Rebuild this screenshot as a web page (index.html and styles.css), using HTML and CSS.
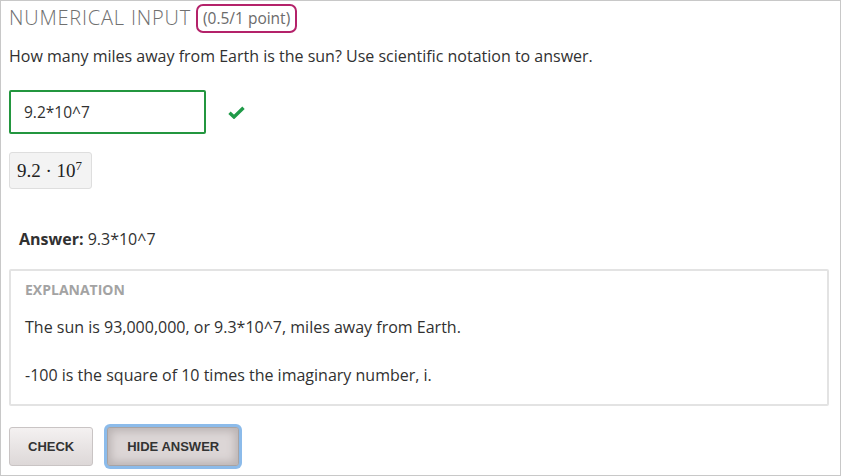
FILE: index.html
```html
<!DOCTYPE html>
<html>
<head>
<meta charset="utf-8">
<link rel="stylesheet" href="styles.css">
</head>
<body>
<div class="problem">
  <h2 class="title">NUMERICAL INPUT <span class="points">(0.5/1 point)</span></h2>
  <p class="question">How many miles away from Earth is the sun? Use scientific notation to answer.</p>
  <div class="input-row">
    <div class="input">9.2*10^7</div>
    <svg class="check" width="17" height="13" viewBox="0 0 17 13"><path d="M1.5 6.8 L6 11 L15.5 1.8" fill="none" stroke="#1f9a48" stroke-width="3.4" stroke-linejoin="miter"/></svg>
  </div>
  <div class="preview">9.2 · 10<sup>7</sup></div>
  <p class="answer"><b>Answer:</b> 9.3*10^7</p>
  <div class="explanation">
    <div class="exp-label">EXPLANATION</div>
    <p class="exp-text">The sun is 93,000,000, or 9.3*10^7, miles away from Earth.</p>
    <p class="exp-text">-100 is the square of 10 times the imaginary number, i.</p>
  </div>
  <div class="actions">
    <button class="btn">CHECK</button>
    <button class="btn focused">HIDE ANSWER</button>
  </div>
</div>
</body>
</html>
```

FILE: styles.css
```css
html, body { margin: 0; padding: 0; background: #fff; }
body { font-family: "Open Sans", "Liberation Sans", sans-serif; color: #313131; }
.problem {
  box-sizing: border-box;
  width: 841px;
  height: 476px;
  border: 1px solid #c8c8c8;
  padding: 2px 8px 0 8px;
}
.title {
  margin: 0;
  font-size: 20px;
  font-weight: 300;
  letter-spacing: 0.8px;
  color: #707070;
  line-height: 30px;
  height: 30px;
  display: flex;
  align-items: center;
  white-space: nowrap;
}
.points {
  display: inline-block;
  box-sizing: border-box;
  height: 29px;
  margin-left: 5px;
  padding: 0 5px;
  border: 2px solid #b4226a;
  border-radius: 7px;
  font-size: 15.5px;
  letter-spacing: 0;
  font-weight: 400;
  color: #6b6b6b;
  line-height: 25px;
}
.question {
  margin: 12px 0 0 0;
  font-size: 16px;
  line-height: 22px;
}
.input-row {
  margin-top: 23px;
  display: flex;
  align-items: center;
}
.input {
  box-sizing: border-box;
  width: 197px;
  height: 44px;
  border: 2px solid #23963f;
  border-radius: 2px;
  padding-left: 13px;
  font-size: 15.5px;
  line-height: 40px;
}
.check { margin-left: 22px; }
.preview {
  display: inline-block;
  box-sizing: border-box;
  margin-top: 18px;
  height: 37px;
  padding: 0 9px 0 7px;
  background: #f3f3f3;
  border: 1px solid #dedede;
  border-radius: 3px;
  font-family: "Liberation Serif", "DejaVu Serif", serif;
  font-size: 19px;
  line-height: 35px;
  color: #222;
}
.preview sup { font-size: 13px; vertical-align: 7px; line-height: 0; }
.answer {
  margin: 39px 0 0 10px;
  font-size: 16px;
  line-height: 22px;
}
.answer b { font-weight: 700; }
.explanation {
  box-sizing: border-box;
  margin-top: 19px;
  width: 820px;
  height: 137px;
  border: 2px solid #e3e3e3;
  border-radius: 2px;
  padding: 9px 14px 0 14px;
}
.exp-label {
  font-size: 14px;
  font-weight: 700;
  color: #a3a3a3;
  line-height: 20px;
}
.exp-text {
  margin: 16px 0 0 0;
  font-size: 16px;
  line-height: 22px;
}
.exp-text + .exp-text { margin-top: 26px; }
.actions {
  margin-top: 21px;
  display: flex;
  align-items: center;
  gap: 14px;
}
.btn {
  box-sizing: border-box;
  height: 39px;
  padding: 0 18px;
  border: 1px solid #c9c4c4;
  border-radius: 3px;
  background: linear-gradient(#f4f1f1, #ddd8d8);
  font-family: "Liberation Sans", Arial, sans-serif;
  font-weight: 700;
  font-size: 13px;
  color: #333;
}
.btn.focused {
  background: #dcd6d6;
  box-shadow: inset 0 0 8px 3px #b9b2b2, 0 0 0 3px #8cbbea;
  border-color: #a8a3a3;
  padding: 0 19px;
}
```
